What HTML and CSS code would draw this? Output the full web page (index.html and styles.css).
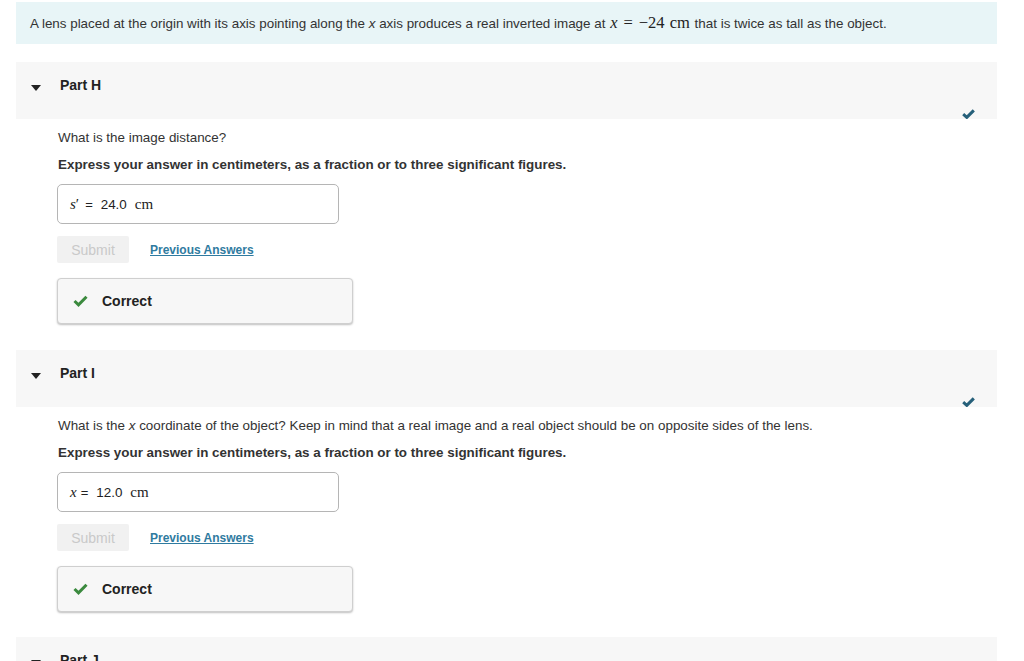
FILE: index.html
```html
<!DOCTYPE html>
<html lang="en">
<head>
<meta charset="utf-8">
<title>Lens problem</title>
<link rel="stylesheet" href="styles.css">
</head>
<body>
<div class="page">
  <div class="intro"><span>A lens placed at the origin with its axis pointing along the <i>x</i> axis produces a real inverted image at <span class="math"><i class="mi">x</i><span class="mo">=</span>−24 <span class="mu">cm</span></span> that is twice as tall as the object.</span></div>

  <section class="part">
    <div class="part-head">
      <span class="caret"></span>
      <span class="part-title">Part H</span>
      <svg class="done" width="13" height="10" viewBox="0 0 13 10"><path d="M1.2 5.2 L4.8 8.4 L11.8 1.4" fill="none" stroke="#26607a" stroke-width="3" stroke-linejoin="miter"/></svg>
    </div>
    <div class="part-body">
      <p class="q">What is the image distance?</p>
      <p class="instr">Express your answer in centimeters, as a fraction or to three significant figures.</p>
      <div class="answer"><span class="var"><i>s</i>′</span><span class="eq">=</span><span class="num">24.0</span><span class="unit">cm</span></div>
      <div class="actions">
        <span class="submit">Submit</span>
        <a class="prev" href="#">Previous Answers</a>
      </div>
      <div class="result">
        <svg class="ok" width="15" height="12" viewBox="0 0 15 12"><path d="M1.5 6 L5.5 9.8 L13.5 1.8" fill="none" stroke="#3b8a3e" stroke-width="3"/></svg>
        <span>Correct</span>
      </div>
    </div>
  </section>

  <section class="part">
    <div class="part-head">
      <span class="caret"></span>
      <span class="part-title">Part I</span>
      <svg class="done" width="13" height="10" viewBox="0 0 13 10"><path d="M1.2 5.2 L4.8 8.4 L11.8 1.4" fill="none" stroke="#26607a" stroke-width="3" stroke-linejoin="miter"/></svg>
    </div>
    <div class="part-body">
      <p class="q">What is the <i>x</i> coordinate of the object? Keep in mind that a real image and a real object should be on opposite sides of the lens.</p>
      <p class="instr">Express your answer in centimeters, as a fraction or to three significant figures.</p>
      <div class="answer"><span class="var"><i>x</i></span><span class="eq eq-tight">=</span><span class="num">12.0</span><span class="unit">cm</span></div>
      <div class="actions">
        <span class="submit">Submit</span>
        <a class="prev" href="#">Previous Answers</a>
      </div>
      <div class="result">
        <svg class="ok" width="15" height="12" viewBox="0 0 15 12"><path d="M1.5 6 L5.5 9.8 L13.5 1.8" fill="none" stroke="#3b8a3e" stroke-width="3"/></svg>
        <span>Correct</span>
      </div>
    </div>
  </section>

  <section class="part">
    <div class="part-head">
      <span class="caret"></span>
      <span class="part-title">Part J</span>
    </div>
  </section>
</div>
</body>
</html>
```

FILE: styles.css
```css
html, body {
  margin: 0;
  padding: 0;
  background: #ffffff;
  overflow: hidden;
}

body {
  font-family: "Liberation Sans", Arial, sans-serif;
  color: #333333;
  font-size: 13.4px;
}

.page {
  width: 981px;
  padding: 2px 0 0 16px;
}

.intro {
  background: #e8f5f7;
  height: 42px;
  line-height: 42px;
  padding: 0 14px;
  font-size: 13.4px;
  color: #333;
  white-space: nowrap;
}

.intro i {
  font-style: italic;
}

.math {
  font-family: "Liberation Serif", "DejaVu Serif", serif;
  font-size: 16.5px;
  margin: 0 1px 0 1px;
  color: #222;
}

.math .mi {
  font-style: italic;
}

.math .mo {
  margin: 0 6px;
}

.math .mu {
  margin-left: 1px;
}

.part {
  margin-top: 18px;
}

.part + .part {
  margin-top: 26px;
}

.part:last-child {
  margin-top: 25px;
}

.part-head {
  position: relative;
  background: #f7f7f7;
  height: 57px;
  display: flex;
  align-items: flex-start;
  padding-top: 15px;
  box-sizing: border-box;
}

.caret {
  width: 0;
  height: 0;
  border-left: 5px solid transparent;
  border-right: 5px solid transparent;
  border-top: 6px solid #222;
  margin: 8px 0 0 15px;
}

.part-title {
  font-weight: bold;
  font-size: 14px;
  color: #222;
  margin-left: 19px;
  line-height: 17px;
}

.done {
  position: absolute;
  right: 22px;
  bottom: 0;
}

.part-body {
  padding: 10px 0 0 42px;
}

.q {
  margin: 0;
  line-height: 18px;
  color: #333;
}

.instr {
  margin: 9px 0 0;
  line-height: 18px;
  font-weight: bold;
  color: #333;
}

.answer {
  margin-top: 10px;
  margin-left: -1px;
  width: 282px;
  height: 40px;
  box-sizing: border-box;
  border: 1px solid #b5b5b5;
  border-radius: 5px;
  display: flex;
  align-items: center;
  padding-left: 12px;
  color: #222;
}

.var {
  font-family: "Liberation Serif", "DejaVu Serif", serif;
  font-size: 15px;
}

.eq {
  margin: 0 8px 0 6px;
  font-size: 13px;
}

.eq-tight {
  margin-left: 4px;
}

.num {
  font-size: 13.4px;
}

.unit {
  font-family: "Liberation Serif", "DejaVu Serif", serif;
  font-size: 15px;
  margin-left: 8px;
}

.actions {
  margin-top: 12px;
  margin-left: -1px;
  display: flex;
  align-items: center;
  height: 27px;
}

.submit {
  width: 72px;
  height: 27px;
  background: #f1f1f1;
  color: #c9c9c9;
  font-size: 14px;
  border-radius: 2px;
  display: flex;
  align-items: center;
  justify-content: center;
}

.prev {
  margin-left: 21px;
  font-weight: bold;
  font-size: 12px;
  color: #2f7ba0;
  text-decoration: underline;
}

.result {
  margin-top: 15px;
  margin-left: -1px;
  width: 296px;
  height: 46px;
  box-sizing: border-box;
  border: 1px solid #cfcfcf;
  border-radius: 4px;
  background: #f7f7f7;
  box-shadow: 0 1px 2px rgba(0, 0, 0, 0.25);
  display: flex;
  align-items: center;
  padding-left: 15px;
  font-weight: bold;
  font-size: 14px;
  color: #222;
}

.ok {
  margin-right: 14px;
}
```
